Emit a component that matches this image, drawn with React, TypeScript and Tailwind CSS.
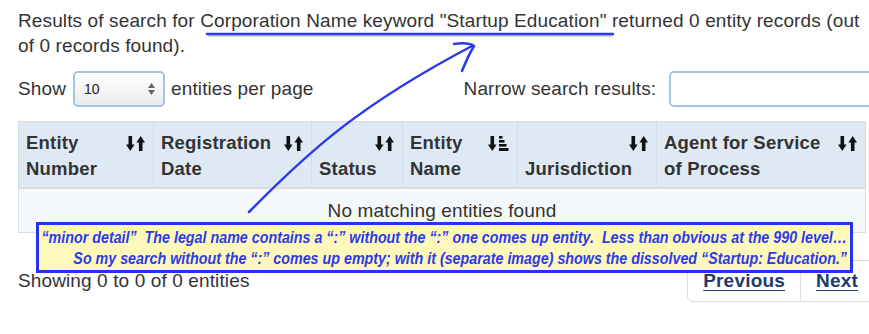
import type { ReactNode } from "react";

type Kolom = {
  baris1: string;
  baris2: string;
  lebar: string;
  ikon: "sort" | "amount";
};

const kolom: Kolom[] = [
  { baris1: "Entity", baris2: "Number", lebar: "w-[135px]", ikon: "sort" },
  { baris1: "Registration", baris2: "Date", lebar: "w-[158px]", ikon: "sort" },
  { baris1: "", baris2: "Status", lebar: "w-[91px]", ikon: "sort" },
  { baris1: "Entity", baris2: "Name", lebar: "w-[115px]", ikon: "amount" },
  { baris1: "", baris2: "Jurisdiction", lebar: "w-[139px]", ikon: "sort" },
  { baris1: "Agent for Service", baris2: "of Process", lebar: "w-[209px]", ikon: "sort" },
];

function IkonSort() {
  return (
    <svg width="19" height="15" viewBox="0 0 19 15" className="shrink-0 mt-[6px]">
      <rect x="2.5" y="0" width="3.6" height="10" fill="#111" />
      <polygon points="0,8.6 8.6,8.6 4.3,15" fill="#111" />
      <rect x="12.9" y="5" width="3.6" height="10" fill="#111" />
      <polygon points="10.4,6.4 19,6.4 14.7,0" fill="#111" />
    </svg>
  );
}

function IkonAmount() {
  return (
    <svg width="21" height="15" viewBox="0 0 21 15" className="shrink-0 mt-[6px]">
      <rect x="2.5" y="0" width="3.6" height="10" fill="#111" />
      <polygon points="0,8.6 8.6,8.6 4.3,15" fill="#111" />
      <rect x="11" y="0" width="3.5" height="2.6" fill="#111" />
      <rect x="11" y="4" width="5.5" height="2.6" fill="#111" />
      <rect x="11" y="8" width="7.5" height="2.6" fill="#111" />
      <rect x="11" y="12" width="9.5" height="3" fill="#111" />
    </svg>
  );
}

function Catatan({ children }: { children: ReactNode }) {
  return <div className="whitespace-nowrap leading-[21px] scale-x-[0.84] origin-right">{children}</div>;
}

export default function App() {
  return (
    <div
      className="relative w-[869px] h-[334px] overflow-hidden bg-white text-[#333] text-[19px] tracking-[0.12px]"
      style={{ fontFamily: '"Liberation Sans", Arial, sans-serif' }}
    >
      <div className="pl-[18px] pt-[8px]">
        <p className="leading-[25px] whitespace-nowrap">
          Results of search for Corporation Name keyword "Startup Education" returned 0 entity records (out
          <br />
          of 0 records found).
        </p>

        <div className="flex items-center mt-[13px] h-[36px] whitespace-nowrap">
          <span>Show</span>
          <div className="ml-[7px] w-[92px] h-[36px] shrink-0 rounded-[5px] border-2 border-[#a7c3dd] bg-linear-to-b from-white to-[#ebebeb] flex items-center justify-between pl-[9px] pr-[8px] tracking-normal">
            <span className="text-[14px] text-[#222]">10</span>
            <svg width="7" height="12" viewBox="0 0 7 12">
              <polygon points="0,5 7,5 3.5,0" fill="#666" />
              <polygon points="0,7 7,7 3.5,12" fill="#666" />
            </svg>
          </div>
          <span className="ml-[6px]">entities per page</span>
          <span className="ml-[150px]">Narrow search results:</span>
          <div className="ml-[13px] w-[230px] h-[36px] shrink-0 rounded-[5px] border-2 border-[#a7c3dd] bg-white" />
        </div>

        <table className="table-fixed border-collapse w-[847px] mt-[14px] border border-[#ddd] text-[18.5px] tracking-[0.2px]">
          <thead>
            <tr className="bg-[#dfe9f4]">
              {kolom.map((k, i) => (
                <th
                  key={i}
                  className={`${k.lebar} border-x border-[#d4dde6] border-b-2 border-b-[#dcdcdc] pt-[8px] pb-[5px] pl-[7px] pr-[8px] text-left align-bottom font-bold leading-[26px]`}
                >
                  <div className="flex justify-between items-start h-[26px]">
                    <span className="whitespace-nowrap">{k.baris1}</span>
                    {k.ikon === "sort" ? <IkonSort /> : <IkonAmount />}
                  </div>
                  <div className="whitespace-nowrap">{k.baris2}</div>
                </th>
              ))}
            </tr>
          </thead>
          <tbody>
            <tr className="bg-[#f5f8fb]">
              <td colSpan={6} className="text-center py-[9px] leading-[25px] text-[19px] tracking-[0.15px]">
                No matching entities found
              </td>
            </tr>
          </tbody>
        </table>

        <div className="flex items-center mt-[27px] whitespace-nowrap">
          <span>Showing 0 to 0 of 0 entities</span>
          <div className="ml-auto mr-[-5px] flex h-[42px] border border-[#ddd] rounded-l-[6px] font-bold text-[#1c3c6c] tracking-[0.2px]">
            <a className="px-[15px] flex items-center underline underline-offset-[3px] border-r border-[#ddd]">
              Previous
            </a>
            <a className="px-[15px] flex items-center underline underline-offset-[3px]">Next</a>
          </div>
        </div>
      </div>

      {/* catatan kuning di atas tabel */}
      <div
        className="absolute left-[36px] top-[222px] w-[817px] h-[51px] border-[3px] border-[#2433f2] bg-[#fff8bb] text-[#2d3ae8] font-bold italic text-[17px] tracking-normal flex flex-col items-end justify-center pr-[3px] overflow-hidden"
      >
        <Catatan>
          “minor detail”&nbsp; The legal name contains a “:” without the “:” one comes up entity.&nbsp; Less than obvious at the 990 level…
        </Catatan>
        <Catatan>
          So my search without the “:” comes up empty; with it (separate image) shows the dissolved “Startup: Education.”
        </Catatan>
      </div>

      {/* coretan biru: garis bawah dan panah */}
      <svg className="absolute left-0 top-0 pointer-events-none" width="869" height="334" viewBox="0 0 869 334">
        <line x1="208" y1="36" x2="613" y2="36" stroke="#999" strokeWidth="2" opacity="0.4" />
        <line x1="207" y1="34" x2="613" y2="34" stroke="#2b3af0" strokeWidth="2.5" strokeLinecap="round" />
        <path d="M249 212 C 310 150, 360 105, 472 46" fill="none" stroke="#2b3af0" strokeWidth="2.5" strokeLinecap="round" />
        <path d="M454 44 Q 468 42 474 46 Q 468 56 462 71" fill="none" stroke="#2b3af0" strokeWidth="2.5" strokeLinecap="round" strokeLinejoin="round" />
      </svg>
    </div>
  );
}
